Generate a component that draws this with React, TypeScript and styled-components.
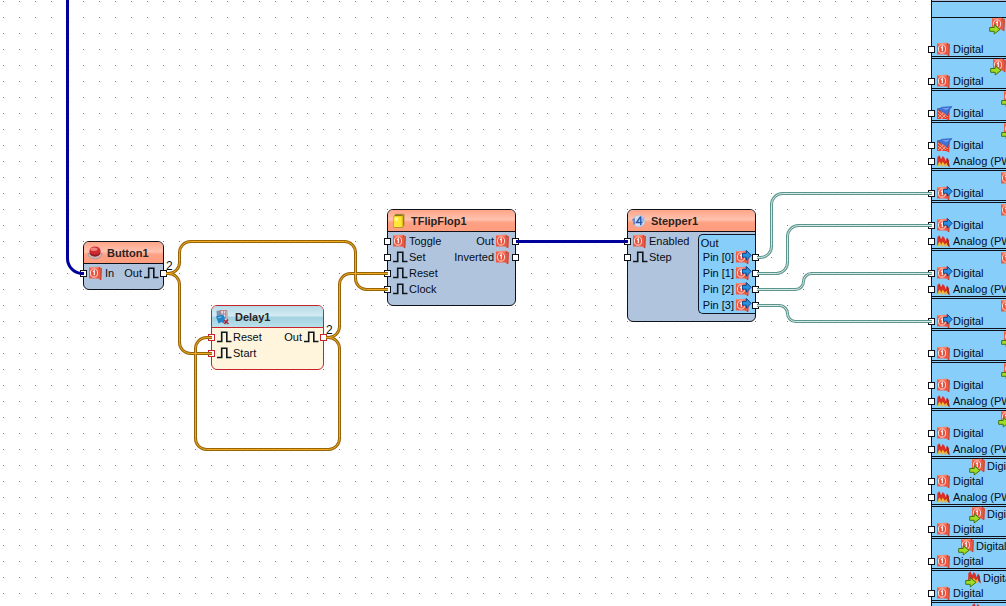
import React from "react";
import styled, { createGlobalStyle, css } from "styled-components";

const PageStyle = createGlobalStyle`
  * { box-sizing: border-box; }
  body {
    margin: 0;
    background: #fff;
    color: #060c14;
    font: 11px/16px "Liberation Sans", Arial, sans-serif;
  }
  ul { list-style: none; margin: 0; padding: 0; }
`;

type Theme = "salmon" | "cyan";
type IconName = "digital" | "digitalOut" | "digitalIn" | "pullUp" | "analog" | "analogIn" | "pulse";

const lineColor = { salmon: "#101018", cyan: "#c8222c" };

const Canvas = styled.main`
  position: relative;
  min-height: 100vh;
  overflow: hidden;
`;

const Layer = styled.svg`
  position: absolute;
  inset: 0;
  width: 100%;
  height: 100%;
  pointer-events: none;
`;

const NodeBox = styled.section<{ $x: number; $y: number; $w: number; $h: number; $theme: Theme }>`
  position: absolute;
  left: ${(p) => p.$x}px;
  top: ${(p) => p.$y}px;
  width: ${(p) => p.$w}px;
  min-height: ${(p) => p.$h}px;
  border: 1px solid ${(p) => lineColor[p.$theme]};
  border-radius: 6px;
  background: ${(p) => (p.$theme === "cyan" ? "#fff4dc" : "#b0c4de")};
`;

const NodeHeader = styled.header<{ $theme: Theme }>`
  display: flex;
  align-items: center;
  gap: 4px;
  height: 22px;
  padding: 0 3px;
  border-bottom: 1px solid ${(p) => lineColor[p.$theme]};
  border-radius: 5px 5px 0 0;
  background: ${(p) =>
    p.$theme === "cyan"
      ? "linear-gradient(#b4dbe8, #d4ebf2 45%, #a4d2e0 55%, #b8e0ea)"
      : "linear-gradient(#ffa488, #ffc2ae 45%, #ffa084 60%, #ff9c7e)"};
`;

const NodeTitle = styled.h2`
  margin: 0;
  font-size: 11px;
  line-height: 16px;
  font-weight: 700;
  color: #2a2422;
`;

const NodeBody = styled.div`
  display: flex;
  justify-content: space-between;
  padding-top: 1px;
`;

const PinRow = styled.li<{ $side: "left" | "right" }>`
  position: relative;
  display: flex;
  align-items: center;
  gap: 1px;
  height: 16px;
  padding: 0 4px;
  white-space: nowrap;
  flex-direction: ${(p) => (p.$side === "right" ? "row-reverse" : "row")};
`;

const Port = styled.i<{ $side: "left" | "right"; $theme: Theme }>`
  position: absolute;
  top: 5px;
  width: 7px;
  height: 7px;
  border: 1px solid ${(p) => lineColor[p.$theme]};
  background: #fff;
  ${(p) => (p.$side === "right" ? css`right: -4px;` : css`left: -4px;`)}
`;

const PinGroup = styled.div`
  margin-top: 1px;
  border: 1px solid #101828;
  border-right: 0;
  border-radius: 5px 0 0 5px;
  background: #87cefa;
`;

const GroupName = styled.div`
  height: 14px;
  padding-left: 2px;
`;

const Count = styled.span<{ $x: number; $y: number }>`
  position: absolute;
  left: ${(p) => p.$x}px;
  top: ${(p) => p.$y}px;
  font-size: 12px;
`;

const Board = styled.section`
  position: absolute;
  left: 931px;
  top: 0;
  width: 240px;
  border-left: 1px solid #101018;
  background: #87cefa;
`;

const BoardTop = styled.div`
  height: 17px;
  border-top: 1px solid #b0c4de;
  box-shadow: inset 0 1px 0 #101018;
`;

const BoardSection = styled.div<{ $tall?: boolean }>`
  margin-bottom: 1px;
  box-shadow: inset 0 1px 0 #101018, inset 0 -1px 0 #101018;
  ${(p) => p.$tall && css`& > :first-child { margin-bottom: 9px; }`}
`;

const Caption = styled.div<{ $indent: number }>`
  display: flex;
  gap: 2px;
  height: 15px;
  padding-left: ${(p) => p.$indent}px;
  white-space: nowrap;
`;

const Glyph = styled.svg`
  flex: none;
  width: 16px;
  height: 16px;
  overflow: visible;
`;

const Panel = () => (
  <g>
    <path d="M1 2.2 10.5 1.8 13.8 3.6 13.2 15.3 10.2 13.6 1 13.4Z" fill="#ee5a45" />
    <path d="M11 2.1 13.8 3.6 13.2 15.3 10.8 13.8Z" fill="#c9402f" />
    <path d="M1.5 2.8H10.4" stroke="#ff9a82" strokeWidth="1" />
    <path d="M12 3.5 11.7 13.8" stroke="#ef7a62" strokeWidth=".8" />
    <ellipse cx="6" cy="8" rx="3.6" ry="4.1" fill="#e85442" stroke="#ffe0d4" strokeWidth="1" />
    <path d="M5 6.7 6.3 5.8V10.3" fill="none" stroke="#fff" strokeWidth="1.1" />
  </g>
);

const Flames = () => (
  <g>
    <path d="M1 12.5 1.4 4 3.4 2.3 5.2 6.2 6.6 3 8.6 5 9.4 8.2 11 4.6 12.6 7 13.6 14.6 11 11.4 9.6 14 7.6 10 5.8 13 4 9.5 2.4 12.8Z" fill="#d92f26" />
    <path d="M1.2 13.4 2.2 10.4 3.6 8.6 5.2 11.4 6.8 8.6 8.8 11.8 10.6 9.8 11.2 12 9.8 14.2 7.8 11.6 5.8 14 3.8 11.2 2.6 13.4Z" fill="#f4b62a" />
    <path d="M11 5 12.6 7 13.6 14.6 11.6 12Z" fill="#8e3030" />
  </g>
);

const GreenArrow = () => (
  <path d="M.7 10.5H5.2V7.7L11 12.4 5.2 17V14.3H.7Z" fill="#a2dc20" stroke="#3f7416" strokeWidth="1" />
);

function PinIcon({ name }: { name: IconName }) {
  return (
    <Glyph viewBox="0 0 16 16" aria-hidden="true">
      {name === "pulse" && (
        <path d="M1 12.5H5.7V3.2H10.8V12.5H15.5" fill="none" stroke="#10161c" strokeWidth="1.6" />
      )}
      {(name === "digital" || name === "digitalOut") && <Panel />}
      {name === "digitalOut" && (
        <path d="M7.5 4.4H11.3V1.4L16.2 6.3 11.3 11.2V8.2H7.5Z" fill="#2b90e4" stroke="#0c4a94" strokeWidth="1" />
      )}
      {name === "digitalIn" && (
        <>
          <g transform="translate(2 -1)"><Panel /></g>
          <GreenArrow />
        </>
      )}
      {name === "analog" && <Flames />}
      {name === "analogIn" && (
        <>
          <g transform="translate(2 -1)"><Flames /></g>
          <GreenArrow />
        </>
      )}
      {name === "pullUp" && (
        <>
          <path d="M1 3.5 11 3 13.8 4.5 13.2 15.5 10 14 1 14Z" fill="#e8432e" />
          <path d="M2 6 10 13M2 9 7 13.5M4 5 12 12M2 13 8 7M5 14 11 8" stroke="#ffb8a4" strokeWidth=".8" />
          <path d="M1.5 4.2 6.5 2.2 16 1.6 13.2 5 11.4 10.8 8 7.6Z" fill="#3f72d8" stroke="#2c54ac" strokeWidth=".6" />
          <path d="M6 3.6 14 2.6 10.4 5Z" fill="#78a4f2" />
        </>
      )}
    </Glyph>
  );
}

function Pin({ icon, label, side = "left", theme = "salmon" }: {
  icon: IconName; label: string; side?: "left" | "right"; theme?: Theme;
}) {
  return (
    <PinRow $side={side}>
      <Port $side={side} $theme={theme} />
      <PinIcon name={icon} />
      <span>{label}</span>
    </PinRow>
  );
}

const ButtonIcon = () => (
  <Glyph viewBox="0 0 16 16" aria-hidden="true">
    <path d="M1 8.5Q1 13.5 8 14Q15 13.5 15 8.5Z" fill="#c9b4b4" stroke="#a08c90" strokeWidth=".6" />
    <ellipse cx="8" cy="6.4" rx="5.6" ry="5" fill="#cf2a31" />
    <path d="M2.4 7.6Q8 12 13.6 7.6Q12.5 11.6 8 11.6Q3.5 11.6 2.4 7.6Z" fill="#8c1a22" />
    <ellipse cx="7" cy="4.2" rx="3.6" ry="1.7" fill="#ee8580" />
  </Glyph>
);

const FlipIcon = () => (
  <Glyph viewBox="0 0 16 16" aria-hidden="true">
    <path d="M3 3 5 1.3H13V12.5L11.5 14.5H3Z" fill="#e6c616" stroke="#8f7b1c" strokeWidth=".6" />
    <path d="M3 3.6H10.6V14H3Z" fill="#ffe83a" />
    <path d="M4 2.2H11.6" stroke="#6b6420" strokeWidth="1.2" />
    <path d="M12.4 2V12.5" stroke="#8f7c1e" strokeWidth="1" />
    <path d="M4 4.6H7V7.6H4Z" fill="#fff9a8" />
  </Glyph>
);

const StepperIcon = () => (
  <Glyph viewBox="0 0 16 16" aria-hidden="true">
    <circle cx="8" cy="8" r="6" fill="#d3deef" stroke="#a7b7cd" strokeWidth=".6" />
    <path d="M1.2 6.2 4 5V11.5H2.2V7.4H1.2Z" fill="#6888c8" />
    <path d="M9.8 3.5 5.5 9.6H11.5M9.8 3.5V12.3" fill="none" stroke="#2858b0" strokeWidth="1.5" />
    <path d="M12 4.5V9" stroke="#7195d6" strokeWidth="1" />
  </Glyph>
);

const DelayIcon = () => (
  <Glyph viewBox="0 0 16 16" aria-hidden="true">
    <path d="M1.5 2 6.5 1V12.5L2 10.5Z" fill="#7795b5" />
    <path d="M5.5 1.5H12V13H7Z" fill="#d6dfe7" stroke="#c26f72" strokeWidth=".8" />
    <path d="M6.5 5H11.5M8.5 2V11M10.5 2V10" stroke="#ce7474" strokeWidth=".8" />
    <path d="M1 7.5 7.5 5.5 10 8.5 9 14.5 6.5 13 3.5 14.5Z" fill="#2185c7" />
    <path d="M3 9 6.5 7.7" stroke="#77c1ea" strokeWidth="1.2" />
    <path d="M9 11 13.5 15M13 10.5 9.5 15" stroke="#a52539" strokeWidth="1.5" />
  </Glyph>
);

type PinSpec = [IconName, string];

interface NodeSpec {
  title: string;
  icon: React.ReactNode;
  box: [number, number, number, number];
  theme?: Theme;
  inputs: PinSpec[];
  outputs: PinSpec[];
  group?: string;
}

const nodes: NodeSpec[] = [
  { title: "Button1", icon: <ButtonIcon />, box: [83, 241, 81, 49], inputs: [["digital", "In"]], outputs: [["pulse", "Out"]] },
  {
    title: "Delay1", icon: <DelayIcon />, box: [211, 305, 113, 65], theme: "cyan",
    inputs: [["pulse", "Reset"], ["pulse", "Start"]], outputs: [["pulse", "Out"]],
  },
  {
    title: "TFlipFlop1", icon: <FlipIcon />, box: [387, 209, 129, 97],
    inputs: [["digital", "Toggle"], ["pulse", "Set"], ["pulse", "Reset"], ["pulse", "Clock"]],
    outputs: [["digital", "Out"], ["digital", "Inverted"]],
  },
  {
    title: "Stepper1", icon: <StepperIcon />, box: [627, 209, 129, 113], group: "Out",
    inputs: [["digital", "Enabled"], ["pulse", "Step"]],
    outputs: [["digitalOut", "Pin [0]"], ["digitalOut", "Pin [1]"], ["digitalOut", "Pin [2]"], ["digitalOut", "Pin [3]"]],
  },
];

function Node({ title, icon, box, theme = "salmon", inputs, outputs, group }: NodeSpec) {
  const [x, y, w, h] = box;
  const outs = (
    <ul>
      {outputs.map(([i, label]) => <Pin key={label} icon={i} label={label} side="right" theme={theme} />)}
    </ul>
  );
  return (
    <NodeBox $x={x} $y={y} $w={w} $h={h} $theme={theme}>
      <NodeHeader $theme={theme}>
        {icon}
        <NodeTitle>{title}</NodeTitle>
      </NodeHeader>
      <NodeBody>
        <ul>
          {inputs.map(([i, label]) => <Pin key={label} icon={i} label={label} theme={theme} />)}
        </ul>
        {group ? (
          <PinGroup>
            <GroupName>{group}</GroupName>
            {outs}
          </PinGroup>
        ) : outs}
      </NodeBody>
    </NodeBox>
  );
}

const D: PinSpec = ["digital", "Digital"];
const O: PinSpec = ["digitalOut", "Digital"];
const U: PinSpec = ["pullUp", "Digital"];
const A: PinSpec = ["analog", "Analog (PWM)"];

const channels: { icon: IconName; indent: number; pins: PinSpec[]; name?: string }[] = [
  { icon: "digitalIn", indent: 57, pins: [D] },
  { icon: "digitalIn", indent: 58, pins: [D] },
  { icon: "digitalIn", indent: 69, pins: [U] },
  { icon: "digitalIn", indent: 69, pins: [U, A] },
  { icon: "digital", indent: 68, pins: [O] },
  { icon: "digital", indent: 68, pins: [O, A] },
  { icon: "digital", indent: 68, pins: [O, A] },
  { icon: "digital", indent: 68, pins: [O] },
  { icon: "digitalIn", indent: 69, pins: [D] },
  { icon: "digitalIn", indent: 69, pins: [D, A] },
  { icon: "digitalIn", indent: 66, pins: [D, A] },
  { icon: "digitalIn", indent: 37, pins: [D, A], name: "Digital" },
  { icon: "digitalIn", indent: 37, pins: [D], name: "Digital" },
  { icon: "digitalIn", indent: 26, pins: [D], name: "Digital" },
  { icon: "analogIn", indent: 33, pins: [D], name: "Digital" },
  { icon: "analogIn", indent: 37, pins: [] },
];

const goldWires = [
  "M166 273.5H168.5A11 11 0 0 0 179.5 262.5V252.5A11 11 0 0 1 190.5 241.5H344.5A11 11 0 0 1 355.5 252.5V278.5A11 11 0 0 0 366.5 289.5H388",
  "M166 273.5H168.5A11 11 0 0 1 179.5 284.5V342.5A11 11 0 0 0 190.5 353.5H212",
  "M326 337.5H328.5A11 11 0 0 0 339.5 326.5V284.5A11 11 0 0 1 350.5 273.5H388",
  "M326 337.5H328.5A11 11 0 0 1 339.5 348.5V438.5A11 11 0 0 1 328.5 449.5H206.5A11 11 0 0 1 195.5 438.5V348.5A11 11 0 0 1 206.5 337.5H212",
];

const greenWires = [
  "M757 257.5H760.5A11 11 0 0 0 771.5 246.5V204.5A11 11 0 0 1 782.5 193.5H932",
  "M757 273.5H776.5A11 11 0 0 0 787.5 262.5V236.5A11 11 0 0 1 798.5 225.5H932",
  "M757 289.5H795.5A8 8 0 0 0 803.5 281.5A8 8 0 0 1 811.5 273.5H932",
  "M757 305.5H779.5A8 8 0 0 1 787.5 313.5A8 8 0 0 0 795.5 321.5H932",
];

const blueWires = ["M67.5 0V258.5A15 15 0 0 0 81 273.5H84", "M516 241.5H628"];

export default function App() {
  return (
    <>
      <PageStyle />
      <Canvas>
        <Layer aria-hidden="true">
          <defs>
            <pattern id="dots" width="16" height="16" patternUnits="userSpaceOnUse">
              <rect x="3" y="1" width="1" height="1" fill="#7c7c7c" />
              <path d="M5 1h1v1h-1zM2 4h1v1h-1zM5 6h1v1h-1z" fill="#f0f0f0" />
            </pattern>
          </defs>
          <rect width="100%" height="100%" fill="url(#dots)" />
        </Layer>
        {nodes.map((n) => <Node key={n.title} {...n} />)}
        <Board>
          <BoardTop />
          {channels.map((c, i) => (
            <BoardSection key={i} $tall={i === 0}>
              <Caption $indent={c.indent}>
                <PinIcon name={c.icon} />
                {c.name && <span>{c.name}</span>}
              </Caption>
              <ul>
                {c.pins.map(([icon, label]) => <Pin key={label} icon={icon} label={label} />)}
              </ul>
            </BoardSection>
          ))}
        </Board>
        <Layer fill="none" aria-hidden="true">
          {blueWires.map((d) => <path key={d} d={d} stroke="#00009a" strokeWidth="3" />)}
          {goldWires.map((d) => <path key={d} d={d} stroke="#986408" strokeWidth="3" />)}
          {goldWires.map((d) => <path key={d} d={d} stroke="#f0ac20" strokeWidth="1" />)}
          {greenWires.map((d) => <path key={d} d={d} stroke="#5c948e" strokeWidth="3" />)}
          {greenWires.map((d) => <path key={d} d={d} stroke="#d8eae6" strokeWidth="1" />)}
        </Layer>
        <Count $x={166} $y={258}>2</Count>
        <Count $x={326} $y={322}>2</Count>
      </Canvas>
    </>
  );
}
